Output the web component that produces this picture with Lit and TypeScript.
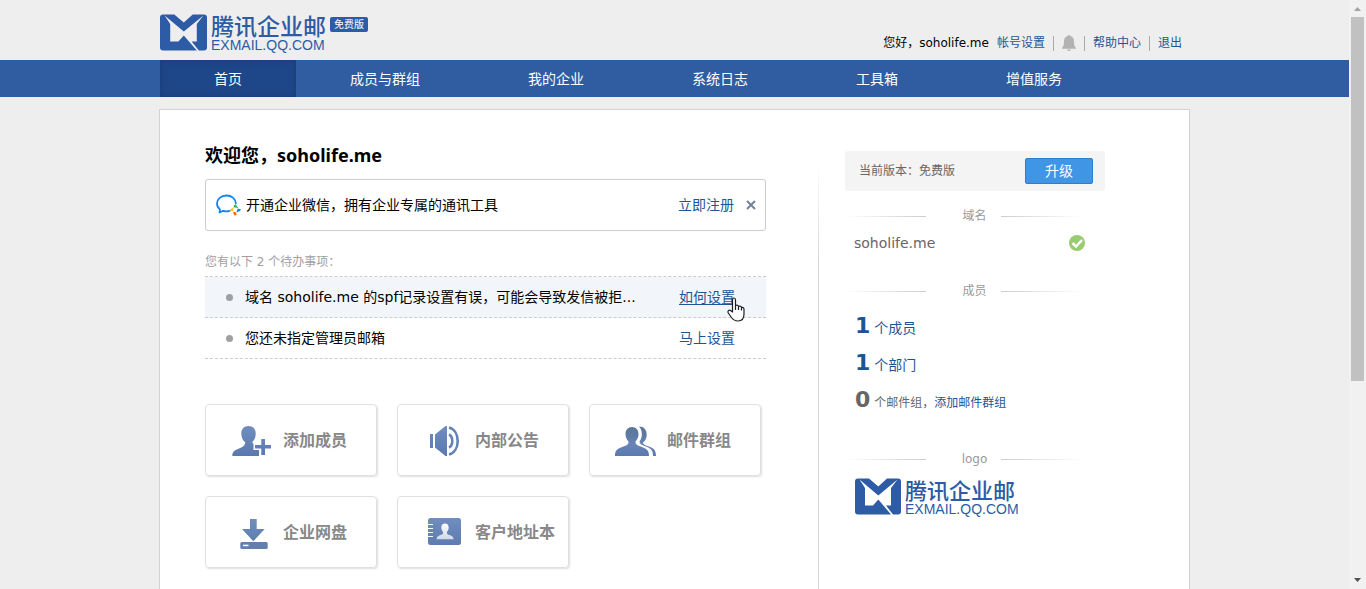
import { LitElement, html, css, svg } from "lit";
import { customElement, property } from "lit/decorators.js";

/** Brand mark with the product name beside it. */
@customElement("exmail-logo")
class ExmailLogo extends LitElement {
  @property({ type: Boolean, reflect: true }) small = false;

  static styles = css`
    :host {
      display: flex;
      gap: 4px;
      color: #2d5ba5;
      --name: 23px;
      --mark: 47px;
    }
    :host([small]) {
      --name: 22px;
      --mark: 46px;
    }
    .mark {
      display: block;
      width: var(--mark);
      height: 37px;
      flex: none;
    }
    .words {
      display: flex;
      flex-direction: column;
      gap: 2px;
      white-space: nowrap;
    }
    .name {
      font: 500 var(--name) / 23px "Noto Sans CJK SC", sans-serif;
    }
    .domain {
      font: 14px/13px "Liberation Sans", Arial, sans-serif;
    }
  `;

  render() {
    return html`
      <svg class="mark" viewBox="0 0 46 37" preserveAspectRatio="none" aria-hidden="true">
        <path
          fill="currentColor"
          d="M3 .5H14L23.300 8.500 32 .5H43Q46 .5 46 3.500V33.500Q46 36.500 43 36.500H38L31 27.500H36V10L42.500 1.500 23.300 17.500 4.500 1.500 10 10V27.500H18L23.300 21.500 36 36.500H3Q0 36.500 0 33.500V3.500Q0 .5 3 .5Z"
        />
      </svg>
      <span class="words">
        <span class="name">腾讯企业邮</span>
        <span class="domain">EXMAIL.QQ.COM</span>
      </span>
    `;
  }
}

const gradient = svg`
  <defs>
    <linearGradient id="g" x1="0" y1="0" x2="0" y2="32" gradientUnits="userSpaceOnUse">
      <stop offset="0" stop-color="#708fbe" />
      <stop offset="1" stop-color="#5a78ae" />
    </linearGradient>
    <linearGradient id="d" x1="0" y1="0" x2="0" y2="32" gradientUnits="userSpaceOnUse">
      <stop offset="0" stop-color="#5d7596" />
      <stop offset=".35" stop-color="#5f7aa5" />
      <stop offset=".6" stop-color="#6684b8" />
      <stop offset="1" stop-color="#5a78ae" />
    </linearGradient>
    <linearGradient id="w" x1="0" y1="6" x2="0" y2="23" gradientUnits="userSpaceOnUse">
      <stop offset="0" stop-color="#fff" />
      <stop offset="1" stop-color="#cdd6e4" />
    </linearGradient>
  </defs>`;

const icons = {
  add: svg`
    <path fill="url(#g)" d="M17.500 1C22 1 24.700 4 24.700 8.500 24.700 12.500 23.500 15 21.500 16.800V18.500H22.500V25H28V31H1.300C1.300 27 3.500 25.300 8 23.600 12 22 14.200 20.500 14.200 17.300 11.800 15.500 10.300 12.500 10.300 8.500 10.300 4 13 1 17.500 1Z" />
    <path fill="url(#g)" d="M30.300 14H34V20H40V23.500H34V30H30.300V23.500H24V20H30.300Z" />`,
  speaker: svg`
    <path fill="url(#g)" d="M7 9H10V23H7ZM12 9.500 22.500 1H24V31H22.500L12 22.500Z" />
    <path fill="none" stroke="#6482b5" stroke-width="2.600" d="M26 2.500C31.500 4 34.700 9.500 34.700 16S31.500 28 26 29.500M26 9.500C28 10.500 29.300 13 29.300 16S28 21.500 26 22.500" />`,
  group: svg`
    <path fill="url(#d)" d="M24 1.500C29 1.500 31.700 5 31.700 9.500 31.700 13 30.500 15.500 28 17.500 28 19.500 30.500 20.300 34 21.500 39 23.200 41 25.500 41 31H38C38 26 36.500 23.500 31 21.500 27 20 24.500 19 24.500 16.500 28 12 27.500 5 24 1.500Z" />
    <path fill="url(#d)" d="M17 2C21 2 23.500 5 23.500 9 23.500 12 22.300 14.500 20.500 16.500V18C21 20 24 21 27.500 22.200 32.500 24 34 26 34 31H0C0 26 1.500 24 6.500 22.200 10 21 13 20 13.500 18V16.500C11.700 14.500 10.500 12 10.500 9 10.500 5 13 2 17 2Z" />`,
  drive: svg`
    <path fill="url(#g)" d="M19 2H25.700V12H33.700L22.300 24.300 11 12H19Z" />
    <rect x="9.300" y="25" width="27.400" height="7" rx="1.500" fill="#6380ad" />
    <rect x="12" y="27.700" width="5.500" height="1.500" fill="#fff" />`,
  book: svg`
    <rect x="5" y="1" width="33" height="27" rx="2.500" fill="url(#g)" />
    <path stroke="#fff" stroke-width="1.200" d="M5 7.500H10M5 11.500H10M5 15.500H10M5 19.500H10" />
    <path fill="url(#w)" d="M22 6.500C24.300 6.500 25.700 8 25.700 10.500 25.700 12.500 25 13.800 24 14.800V16.500C25 18.500 30.500 18 30.700 22.300H13.500C13.700 18 19 18.500 20 16.500V14.800C19 13.800 18.300 12.500 18.300 10.500 18.300 8 19.700 6.500 22 6.500Z" />`,
};

const shortcuts = [
  { icon: icons.add, label: "添加成员" },
  { icon: icons.speaker, label: "内部公告" },
  { icon: icons.group, label: "邮件群组" },
  { icon: icons.drive, label: "企业网盘" },
  { icon: icons.book, label: "客户地址本" },
];

const tabs = ["首页", "成员与群组", "我的企业", "系统日志", "工具箱", "增值服务"];

@customElement("app-root")
class AppRoot extends LitElement {
  static styles = css`
    :host {
      display: flex;
      height: 100vh;
      overflow: hidden;
      background: #eee;
      color: #000;
      font: 12px/18px "DejaVu Sans", Verdana, "Noto Sans CJK SC", sans-serif;
    }
    * {
      box-sizing: border-box;
    }
    a {
      color: #1e5494;
      text-decoration: none;
    }
    ul,
    h1,
    h2,
    p {
      margin: 0;
      padding: 0;
      list-style: none;
      font-weight: normal;
    }
    button {
      font: inherit;
      cursor: pointer;
      padding: 0;
    }
    .page {
      flex: 1;
      min-width: 0;
      display: flex;
      flex-direction: column;
    }
    .wrap {
      width: 100%;
      max-width: 1031px;
      margin: 0 auto;
    }

    .header {
      display: flex;
      height: 60px;
      padding: 14px 8px 0 1px;
    }
    .edition {
      margin: 3px auto 0 4px;
      height: 15px;
      padding: 0 4px;
      border-radius: 2px;
      background: #2d5ba5;
      color: #fff;
      font-size: 10px;
      line-height: 15px;
    }
    .account {
      display: flex;
      align-items: center;
      gap: 8px;
      height: 18px;
      margin-top: 20px;
      white-space: nowrap;
    }
    .sep {
      width: 1px;
      height: 15px;
      background: #aaa;
    }
    .bell {
      display: block;
      width: 14px;
      height: 16px;
    }

    .nav {
      background: #305ca2;
    }
    .tabs {
      display: flex;
      padding-left: 1px;
    }
    .tab {
      padding: 1px 54px 0;
      color: #fff;
      font-size: 14px;
      line-height: 36px;
      white-space: nowrap;
    }
    .tab.active {
      background: #1e4789;
      box-shadow: inset 0 0 6px #173a75;
    }

    .card {
      flex: 1;
      display: flex;
      margin-top: 12px;
      border: 1px solid #d2d2d2;
      border-bottom: 0;
      background: #fff;
    }
    .main {
      flex: 1;
      min-width: 0;
      padding: 33px 52px 0 45px;
    }
    .welcome {
      font: bold 18px/24px "Noto Sans", "Noto Sans CJK SC", sans-serif;
    }
    .notice {
      display: flex;
      align-items: center;
      height: 52px;
      margin-top: 12px;
      padding: 0 9px;
      border: 1px solid #ccc;
      border-radius: 3px;
      font-size: 14px;
    }
    .wecom {
      width: 26px;
      height: 22px;
      margin-right: 5px;
    }
    .notice a {
      margin-left: auto;
    }
    .close {
      display: grid;
      place-items: center;
      width: 10px;
      height: 10px;
      margin-left: 12px;
      border: 0;
      background: none;
    }
    .hint {
      margin-top: 22px;
      color: #a0a0a0;
    }
    .todos {
      margin-top: 5px;
      border-top: 1px dashed #ccc;
      font-size: 14px;
    }
    .todo {
      display: flex;
      align-items: center;
      height: 41px;
      padding: 0 31px 0 21px;
      border-bottom: 1px dashed #ccc;
    }
    .todo.hover {
      background: #f2f6fa;
    }
    .todo.hover a {
      text-decoration: underline;
      text-underline-offset: 2px;
    }
    .dot {
      width: 7px;
      height: 7px;
      margin-right: 12px;
      border-radius: 50%;
      background: #a0a0a0;
    }
    .action {
      position: relative;
      margin-left: auto;
    }
    .pointer {
      position: absolute;
      left: 48px;
      top: 9px;
      width: 18px;
      height: 25px;
    }
    .shortcuts {
      display: grid;
      grid-template-columns: repeat(auto-fill, 172px);
      gap: 20px;
      margin-top: 45px;
    }
    .shortcut {
      display: flex;
      align-items: center;
      gap: 10px;
      height: 72px;
      padding: 2px 0 0 25px;
      border: 1px solid #e0e0e0;
      border-radius: 4px;
      box-shadow: 1px 1px 2px #ddd;
      color: #888;
      font-size: 16px;
      font-weight: bold;
      white-space: nowrap;
    }
    .shortcut svg {
      flex: none;
      width: 42px;
      height: 32px;
    }

    .side {
      flex: none;
      width: 371px;
      padding: 41px 84px 0 27px;
      background: linear-gradient(transparent 50px, #d8d8d8 150px) 0 0 / 1px 100% no-repeat;
      color: #666;
    }
    .version {
      display: flex;
      align-items: center;
      justify-content: space-between;
      height: 40px;
      padding: 0 12px 0 14px;
      border-radius: 3px;
      background: #f4f4f4;
    }
    .upgrade {
      width: 68px;
      height: 26px;
      border: 1px solid #2f7ecb;
      border-radius: 2px;
      background: #4095e5;
      color: #fff;
      font-size: 14px;
    }
    .title {
      display: grid;
      grid-template-columns: 81px 75px 81px;
      align-items: center;
      margin-top: 16px;
      color: #999;
      font-size: 12px;
      line-height: 18px;
    }
    .title::before,
    .title::after {
      content: "";
      height: 1px;
      background: linear-gradient(90deg, transparent, #ccc);
    }
    .title::after {
      background: linear-gradient(270deg, transparent, #ccc);
    }
    .title span {
      padding-left: 22px;
      text-align: center;
    }
    .domain {
      display: flex;
      align-items: center;
      justify-content: space-between;
      margin: 8px 20px 29px 9px;
      font-size: 14px;
      line-height: 20px;
    }
    .ok {
      display: block;
      width: 16px;
      height: 16px;
    }
    .stats {
      margin: 7px 0 32px 10px;
    }
    .stat {
      font-size: 14px;
      line-height: 37px;
      height: 37px;
      white-space: nowrap;
    }
    .stat b {
      margin-right: 4px;
      font-size: 22px;
    }
    .stat.small {
      font-size: 12px;
    }
    .brand {
      margin: 10px 0 0 10px;
    }

    .scrollbar {
      flex: none;
      display: flex;
      flex-direction: column;
      align-items: center;
      justify-content: space-between;
      width: 17px;
      padding: 6px 0;
      background: #f1f1f1;
    }
    .thumb {
      width: 13px;
      height: 63%;
      margin: 6px 0 auto;
      background: #c1c1c1;
    }
    .arrow {
      display: block;
      width: 7px;
      height: 5px;
    }
  `;

  render() {
    return html`
      <div class="page" lang="zh-CN">
        <header class="wrap header">
          <exmail-logo></exmail-logo>
          <span class="edition">免费版</span>
          <div class="account">
            <span>您好，soholife.me</span>
            <a href="#">帐号设置</a>
            <span class="sep"></span>
            <a href="#" aria-label="消息">
              <svg class="bell" viewBox="0 0 14 16">
                <path
                  fill="#b2b2b2"
                  d="M7 0Q8 0 8.300 1C11 1.600 12 4 12 6.500 12 10 12.500 11.500 14 13V13.700H0V13C1.500 11.500 2 10 2 6.500 2 4 3 1.600 5.700 1Q6 0 7 0ZM5 14.500H9Q8.500 16 7 16 5.500 16 5 14.500Z"
                />
              </svg>
            </a>
            <span class="sep"></span>
            <a href="#">帮助中心</a>
            <span class="sep"></span>
            <a href="#">退出</a>
          </div>
        </header>
        <nav class="nav">
          <div class="wrap tabs">
            ${tabs.map((t, i) => html`<a href="#" class="tab ${i === 0 ? "active" : ""}">${t}</a>`)}
          </div>
        </nav>
        <div class="wrap card">
          <main class="main">
            <h1 class="welcome">欢迎您，soholife.me</h1>
            <div class="notice">
              <svg class="wecom" viewBox="0 0 26 22" aria-hidden="true">
                <path
                  fill="none"
                  stroke="#1485ee"
                  stroke-width="1.800"
                  stroke-linecap="round"
                  stroke-linejoin="round"
                  d="M20.800 9.500C20.500 4.500 16.500 1.500 11.500 1.500 6 1.500 2 5 2 9.500 2 12 3.200 14 5 15.400L4.500 18.500 8 16.800Q11.500 17.800 14.500 16.800"
                />
                <path fill="#2eb84b" d="M20 10.500Q21.500 10.500 21.700 12L23.500 14.300 20.500 13.500 18.500 13.500Q18.500 11 20 10.500Z" />
                <path fill="#1485ee" d="M22.500 14.800 25.500 15Q26.200 16.500 24.500 17.300L21.500 18.500Z" />
                <path fill="#fb6500" d="M18 18 21 18.200 21.500 20.500Q20.500 22.300 19.200 21Z" />
                <path fill="#ffc51f" d="M18.500 13.500 18.200 17 15.500 17.300Q14 16 15.500 15Z" />
              </svg>
              <span>开通企业微信，拥有企业专属的通讯工具</span>
              <a href="#">立即注册</a>
              <button class="close" aria-label="关闭">
                <svg width="10" height="10" viewBox="0 0 10 10">
                  <path stroke="#73819a" stroke-width="2" d="M1 1 9 9M9 1 1 9" />
                </svg>
              </button>
            </div>
            <p class="hint">您有以下 2 个待办事项：</p>
            <ul class="todos">
              <li class="todo hover">
                <span class="dot"></span>
                <span>域名 soholife.me 的spf记录设置有误，可能会导致发信被拒...</span>
                <span class="action">
                  <a href="#">如何设置</a>
                  <svg class="pointer" viewBox="0 0 18 25" aria-hidden="true">
                    <path
                      fill="#fff"
                      stroke="#1c1c28"
                      stroke-width="1.200"
                      stroke-linejoin="round"
                      d="M5.500 15V3Q5.500 1 7 1T8.500 3V8.500Q11 7.500 11.500 9.500 14 8.500 14.500 10.500 17 10 17 12.500V17C17 21 15 24 11 24 7.500 24 6 22.500 4.500 20.500L1.300 16C.3 14 2 12.500 3.500 13.500ZM8.500 8.500V13M11.500 9.500V13M14.500 10.500V13.500"
                    />
                  </svg>
                </span>
              </li>
              <li class="todo">
                <span class="dot"></span>
                <span>您还未指定管理员邮箱</span>
                <span class="action"><a href="#">马上设置</a></span>
              </li>
            </ul>
            <div class="shortcuts">
              ${shortcuts.map(
                (s) => html`
                  <a href="#" class="shortcut">
                    <svg viewBox="0 0 42 32" aria-hidden="true">${gradient}${s.icon}</svg>
                    <span>${s.label}</span>
                  </a>
                `,
              )}
            </div>
          </main>
          <aside class="side">
            <div class="version">
              <span>当前版本：免费版</span>
              <button class="upgrade">升级</button>
            </div>
            <h2 class="title"><span>域名</span></h2>
            <div class="domain">
              <span>soholife.me</span>
              <svg class="ok" viewBox="0 0 16 16" aria-hidden="true">
                <circle cx="8" cy="8" r="8" fill="#99cc6e" />
                <path fill="none" stroke="#fff" stroke-width="2.500" d="M3.500 8 7 11.500 13 5" />
              </svg>
            </div>
            <h2 class="title"><span>成员</span></h2>
            <div class="stats">
              <div class="stat"><a href="#"><b>1</b>个成员</a></div>
              <div class="stat"><a href="#"><b>1</b>个部门</a></div>
              <div class="stat small"><b>0</b>个邮件组，<a href="#">添加邮件群组</a></div>
            </div>
            <h2 class="title"><span>logo</span></h2>
            <exmail-logo small class="brand"></exmail-logo>
          </aside>
        </div>
      </div>
      <div class="scrollbar" aria-hidden="true">
        <svg class="arrow" viewBox="0 0 7 5"><path fill="#a3a3a3" d="M0 5 3.500 1 7 5Z" /></svg>
        <div class="thumb"></div>
        <svg class="arrow" viewBox="0 0 7 5"><path fill="#505050" d="M0 0 3.500 4 7 0Z" /></svg>
      </div>
    `;
  }
}
